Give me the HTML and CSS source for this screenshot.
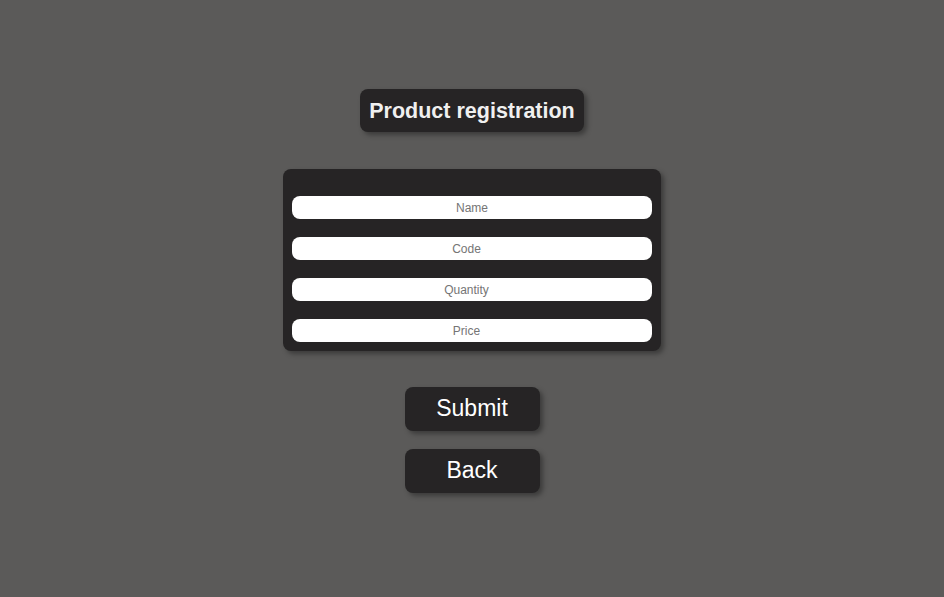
FILE: index.html
```html
<!DOCTYPE html>
<html lang="en">
<head>
  <meta charset="UTF-8" />
  <meta name="viewport" content="width=device-width, initial-scale=1.0"/>
  <title>Product registration</title>
  <link rel="stylesheet" href="styles.css">
</head>
<body>

<div class="title-wrapper">
  <h2>Product registration</h2>
</div>

<form id="product-form">
  <div class="form-box">
    <input type="text" name="name" id="name" placeholder="Name" />
    <input type="number" name="code" id="code" placeholder="Code" />
    <input type="number" name="quantity" id="quantity" placeholder="Quantity" />
    <input type="number" name="price" id="price" placeholder="Price" />
  </div>

  <div class="btn-wrapper">
    <button type="submit" id="submit-btn">Submit</button>
    <button type="button" id="back-btn">Back</button>
  </div>
</form>

</body>
</html>
```

FILE: styles.css
```css
 body {
   font-family: "Liberation Sans", Arial, sans-serif;
   margin: 0;
   background-color: #5b5a59;
   display: flex;
   flex-direction: column;
   align-items: center;
   min-height: 597px;
 }
 .title-wrapper { margin-top: 89px; }
 .title-wrapper h2 {
   margin: 0;
   height: 42px;
   line-height: 43px;
   padding: 1px 9px 0;
   font-size: 21.5px;
   font-weight: bold;
   color: #f0f0f0;
   background-color: #262425;
   border-radius: 8px;
   box-shadow: 3px 3px 5px rgba(0, 0, 0, 0.35);
 }
 form {
   margin-top: 37px;
   display: flex;
   flex-direction: column;
   align-items: center;
 }
 .form-box {
   width: 378px;
   box-sizing: border-box;
   padding: 27px 9px 9px;
   background-color: #262425;
   border-radius: 8px;
   box-shadow: 3px 3px 5px rgba(0, 0, 0, 0.35);
   display: flex;
   flex-direction: column;
   gap: 18px;
 }
 .form-box input {
   width: 100%;
   height: 23px;
   box-sizing: border-box;
   border: none;
   border-radius: 8px;
   background: #fff;
   text-align: center;
   font-family: "Liberation Sans", Arial, sans-serif;
   font-size: 12px;
   padding: 0 8px;
   outline: none;
 }
 .form-box input[type="number"] { padding-right: 4px; }
 .form-box input::placeholder { color: #757575; }
 .btn-wrapper {
   margin-top: 36px;
   display: flex;
   flex-direction: column;
   gap: 18px;
 }
 .btn-wrapper button {
   width: 135px;
   height: 44px;
   padding: 0 0 2px;
   border: none;
   border-radius: 8px;
   background-color: #262425;
   color: #fff;
   font-family: "Liberation Sans", Arial, sans-serif;
   font-size: 23px;
   cursor: pointer;
   box-shadow: 3px 3px 5px rgba(0, 0, 0, 0.35);
 }
```
